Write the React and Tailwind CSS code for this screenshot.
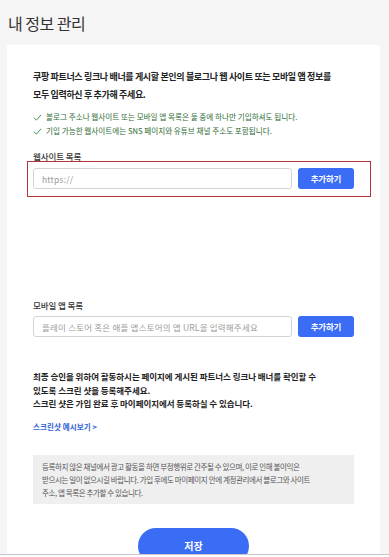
import React from 'react';

const font = { fontFamily: '"Noto Sans CJK KR", "Noto Sans", sans-serif' };

const CheckLine = ({ children }) => (
  <li className="flex items-center gap-[4px] text-[7.6px] leading-[14px] tracking-[0px] text-[#2f6b34]">
    <svg width="9" height="9" viewBox="0 0 10 10" fill="none" className="flex-shrink-0">
      <path d="M1 5.2 L3.8 8 L9 2" stroke="#2f8a3c" strokeWidth="1" />
    </svg>
    <span>{children}</span>
  </li>
);

const UrlRow = ({ placeholder, highlight }) => (
  <div className="relative flex gap-[6px] w-[321px]">
    <input
      type="text"
      placeholder={placeholder}
      className="h-[21px] w-[259px] rounded-[3px] border border-[#d4d4d4] bg-white px-[8px] text-[8.5px] tracking-[0.2px] text-[#333] placeholder:text-[#9a9a9a] outline-none"
    />
    <button className="h-[21px] w-[56px] rounded-[3px] bg-[#3a6cf6] text-[8.5px] font-bold tracking-[-0.2px] text-white">
      추가하기
    </button>
    {highlight && (
      <div className="pointer-events-none absolute -left-[6px] -top-[7px] -right-[17px] -bottom-[8px] border border-[#b8323a]" />
    )}
  </div>
);

export default function App() {
  return (
    <div className="flex h-[557px] flex-col overflow-hidden bg-[#f5f5f5]" style={font}>
      <div className="flex-1 overflow-hidden">
        <h1 className="px-[8px] pt-[13px] text-[16px] leading-[20px] tracking-[-0.5px] text-[#333]">
          내 정보 관리
        </h1>

        <div className="mt-[12px] ml-[7px] w-[373px] bg-white pl-[26px] pt-[23px] pb-[40px]">
          <p className="text-[9px] font-bold leading-[17.5px] tracking-[-0.35px] text-[#222]">
            쿠팡 파트너스 링크나 배너를 게시할 본인의 블로그나 웹 사이트 또는 모바일 앱 정보를
            <br />
            모두 입력하신 후 추가해 주세요.
          </p>

          <ul className="mt-[7px]">
            <CheckLine>블로그 주소나 웹사이트 또는 모바일 앱 목록은 둘 중에 하나만 기입하셔도 됩니다.</CheckLine>
            <CheckLine>기입 가능한 웹사이트에는 SNS 페이지와 유튜브 채널 주소도 포함됩니다.</CheckLine>
          </ul>

          <div className="mt-[12px] text-[8.5px] font-medium leading-[12px] tracking-[-0.1px] text-[#333]">
            웹사이트 목록
          </div>
          <div className="mt-[6px]">
            <UrlRow placeholder="https://" highlight />
          </div>

          <div className="mt-[110px] text-[8.5px] font-medium leading-[12px] tracking-[-0.1px] text-[#333]">
            모바일 앱 목록
          </div>
          <div className="mt-[5px]">
            <UrlRow placeholder="플레이 스토어 혹은 애플 앱스토어의 앱 URL을 입력해주세요" />
          </div>

          <p className="mt-[33px] text-[8.5px] font-bold leading-[13.5px] tracking-[-0.05px] text-[#222]">
            최종 승인을 위하여 활동하시는 페이지에 게시된 파트너스 링크나 배너를 확인할 수
            <br />
            있도록 스크린 샷을 등록해주세요.
            <br />
            스크린 샷은 가입 완료 후 마이페이지에서 등록하실 수 있습니다.
          </p>

          <a href="#" className="mt-[10px] block text-[7.5px] font-bold leading-[12px] tracking-[0.1px] text-[#2f5fd6]">
            스크린샷 예시보기 &gt;
          </a>

          <div className="mt-[22px] w-[321px] bg-[#efeff0] px-[9px] py-[5px] text-[7.5px] leading-[13px] tracking-[-0.4px] text-[#555]">
            등록하지 않은 채널에서 광고 활동을 하면 부정행위로 간주될 수 있으며, 이로 인해 불이익은
            <br />
            받으시는 일이 없으시길 바랍니다. 가입 후에도 마이페이지 안에 계정관리에서 블로그와 사이트
            <br />
            주소, 앱 목록은 추가할 수 있습니다.
          </div>

          <div className="mt-[24px] flex w-[321px] justify-center">
            <button className="h-[36px] w-[111px] rounded-full bg-[#3a6cf6] text-[10px] font-bold text-white">
              저장
            </button>
          </div>
        </div>
      </div>
      <div className="h-[3px] flex-shrink-0 border-t border-[#c8c8c8] bg-white" />
    </div>
  );
}
